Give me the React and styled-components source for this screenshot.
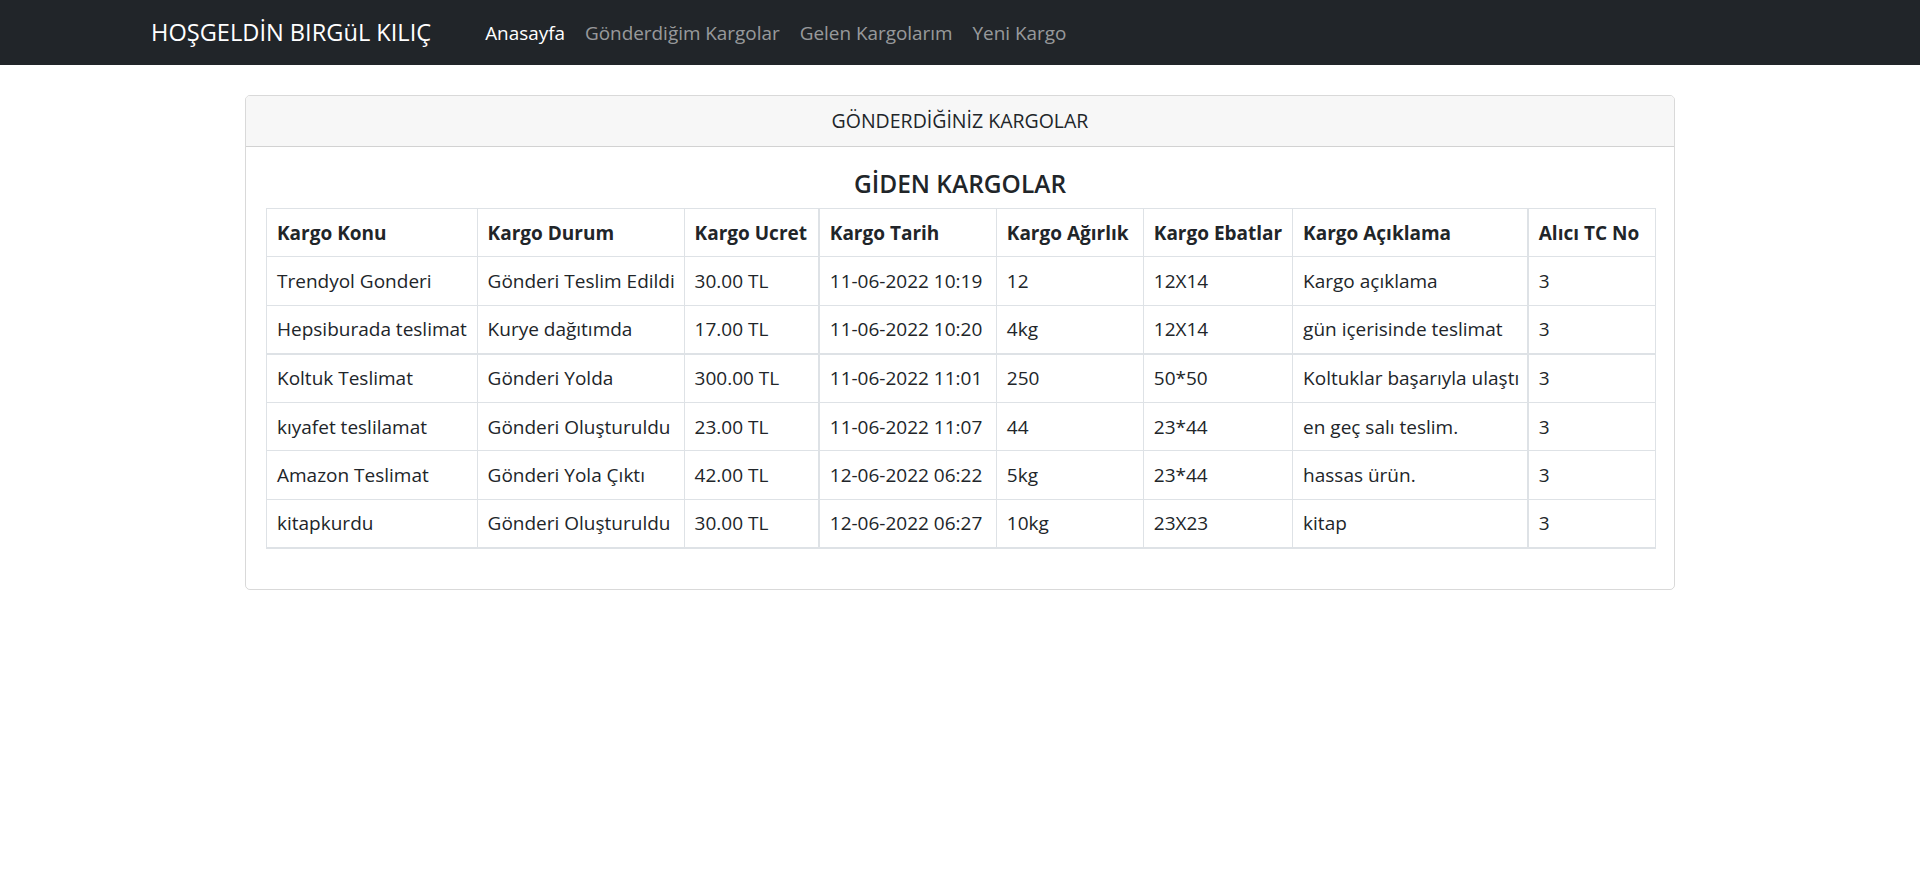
import React from 'react';
import styled, { createGlobalStyle } from 'styled-components';

const GlobalStyle = createGlobalStyle`
  body {
    margin: 0;
    background: #fff;
    color: #212529;
    font-family: 'Open Sans', 'Noto Sans', sans-serif;
    font-size: 19px;
    line-height: 30px;
  }
`;

const Navbar = styled.nav`
  display: flex;
  align-items: center;
  height: 65px;
  padding: 0 151px;
  background: #212529;
`;

const Brand = styled.a`
  color: #fff;
  font-size: 23.6px;
  line-height: 37px;
  margin-right: 44px;
  white-space: nowrap;
`;

const NavList = styled.ul`
  display: flex;
  list-style: none;
  margin: 0;
  padding: 0;
`;

const NavLink = styled.a`
  display: block;
  padding: 0 10px;
  font-size: 18.9px;
  color: ${(props) => (props.$active ? '#fff' : 'rgba(255, 255, 255, 0.55)')};
`;

const Main = styled.main`
  padding-top: 30px;
`;

const Card = styled.section`
  width: 1430px;
  margin: 0 auto;
  box-sizing: border-box;
  border: 1px solid rgba(0, 0, 0, 0.15);
  border-radius: 5px;
  overflow: hidden;
`;

const CardHeader = styled.div`
  padding: 10px 20px;
  text-align: center;
  font-size: 19.5px;
  background: #f7f7f7;
  border-bottom: 1px solid rgba(0, 0, 0, 0.15);
`;

const CardBody = styled.div`
  padding: 20px;
`;

const Title = styled.h5`
  margin: 0 0 11px;
  padding-top: 2px;
  height: 28px;
  text-align: center;
  font-size: 24.5px;
  font-weight: 600;
  line-height: 30px;
`;

const Table = styled.table`
  width: 100%;
  table-layout: fixed;
  border-collapse: collapse;
  margin-bottom: 20px;
`;

const Row = styled.tr`
  border-top: ${(props) => (props.$thick ? '2px' : '1px')} solid #dee2e6;
  border-bottom: ${(props) => (props.$last ? '2px' : '1px')} solid #dee2e6;
`;

const Th = styled.th`
  padding: 8.65px 10px;
  text-align: left;
  font-weight: 700;
  white-space: nowrap;
  border: 1px solid #dee2e6;
  border-left-width: ${(props) => (props.$thick ? '2px' : '1px')};
`;

const Td = styled.td`
  padding: 8.65px 10px;
  white-space: nowrap;
  border: 1px solid #dee2e6;
  border-left-width: ${(props) => (props.$thick ? '2px' : '1px')};
  border-top-width: ${(props) => (props.$rowThick ? '2px' : '1px')};
  border-bottom-width: ${(props) => (props.$rowLast ? '2px' : '1px')};
`;

const columns = [
  { title: 'Kargo Konu', width: 210.6 },
  { title: 'Kargo Durum', width: 207 },
  { title: 'Kargo Ucret', width: 134.7 },
  { title: 'Kargo Tarih', width: 177.5, thick: true },
  { title: 'Kargo Ağırlık', width: 147 },
  { title: 'Kargo Ebatlar', width: 149.3 },
  { title: 'Kargo Açıklama', width: 235.2 },
  { title: 'Alıcı TC No', width: 127.4, thick: true },
];

const rows = [
  ['Trendyol Gonderi', 'Gönderi Teslim Edildi', '30.00 TL', '11-06-2022 10:19', '12', '12X14', 'Kargo açıklama', '3'],
  ['Hepsiburada teslimat', 'Kurye dağıtımda', '17.00 TL', '11-06-2022 10:20', '4kg', '12X14', 'gün içerisinde teslimat', '3'],
  ['Koltuk Teslimat', 'Gönderi Yolda', '300.00 TL', '11-06-2022 11:01', '250', '50*50', 'Koltuklar başarıyla ulaştı', '3'],
  ['kıyafet teslilamat', 'Gönderi Oluşturuldu', '23.00 TL', '11-06-2022 11:07', '44', '23*44', 'en geç salı teslim.', '3'],
  ['Amazon Teslimat', 'Gönderi Yola Çıktı', '42.00 TL', '12-06-2022 06:22', '5kg', '23*44', 'hassas ürün.', '3'],
  ['kitapkurdu', 'Gönderi Oluşturuldu', '30.00 TL', '12-06-2022 06:27', '10kg', '23X23', 'kitap', '3'],
];

const links = ['Anasayfa', 'Gönderdiğim Kargolar', 'Gelen Kargolarım', 'Yeni Kargo'];

const App = () => {
  return (
    <>
      <GlobalStyle />
      <Navbar>
        <Brand>HOŞGELDİN BIRGüL KILIÇ</Brand>
        <NavList>
          {links.map((link, i) => (
            <li key={link}>
              <NavLink $active={i === 0}>{link}</NavLink>
            </li>
          ))}
        </NavList>
      </Navbar>
      <Main>
        <Card>
          <CardHeader>GÖNDERDİĞİNİZ KARGOLAR</CardHeader>
          <CardBody>
            <Title>GİDEN KARGOLAR</Title>
            <Table>
              <colgroup>
                {columns.map((col) => (
                  <col key={col.title} style={{ width: col.width }} />
                ))}
              </colgroup>
              <thead>
                <Row>
                  {columns.map((col) => (
                    <Th key={col.title} $thick={col.thick}>
                      {col.title}
                    </Th>
                  ))}
                </Row>
              </thead>
              <tbody>
                {rows.map((row, r) => (
                  <Row key={r} $thick={r === 2} $last={r === rows.length - 1}>
                    {row.map((cell, c) => (
                      <Td
                        key={c}
                        $thick={columns[c].thick}
                        $rowThick={r === 2}
                        $rowLast={r === rows.length - 1}
                      >
                        {cell}
                      </Td>
                    ))}
                  </Row>
                ))}
              </tbody>
            </Table>
          </CardBody>
        </Card>
      </Main>
    </>
  );
};

export default App;
